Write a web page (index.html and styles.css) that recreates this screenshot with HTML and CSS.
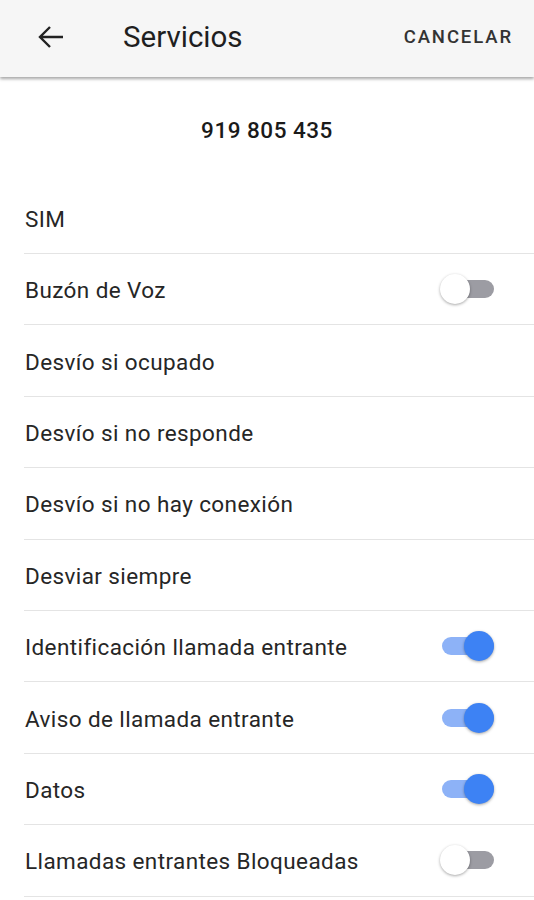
FILE: index.html
```html
<!DOCTYPE html>
<html lang="es">
<head>
    <meta charset="UTF-8" />
    <meta name="viewport" content="width=device-width, initial-scale=1.0" />
    <title>Servicios</title>
    <link rel="stylesheet" href="styles.css">
</head>
<body>

<header class="bar">
    <button class="back" aria-label="Volver">
        <svg width="26" height="24" viewBox="0 0 26 24">
            <path d="M25 12H3 M12 2L2 12L12 22" fill="none" stroke="#222" stroke-width="2.4" stroke-linejoin="miter"/>
        </svg>
    </button>
    <h1>Servicios</h1>
    <button class="cancel">CANCELAR</button>
</header>

<div class="number">919 805 435</div>

<ul class="list">
    <li><span>SIM</span></li>
    <li><span>Buzón de Voz</span><i class="toggle"></i></li>
    <li><span>Desvío si ocupado</span></li>
    <li><span>Desvío si no responde</span></li>
    <li><span>Desvío si no hay conexión</span></li>
    <li><span>Desviar siempre</span></li>
    <li><span>Identificación llamada entrante</span><i class="toggle on"></i></li>
    <li><span>Aviso de llamada entrante</span><i class="toggle on"></i></li>
    <li><span>Datos</span><i class="toggle on"></i></li>
    <li><span>Llamadas entrantes Bloqueadas</span><i class="toggle"></i></li>
</ul>

</body>
</html>
```

FILE: styles.css
```css
*{ box-sizing:border-box; font-family: Roboto, "Liberation Sans", sans-serif; }
body{ margin:0; background:#fff; color:#212121; }

.bar{ display:flex; align-items:center; height:77px; background:#f6f6f6; box-shadow:0 2px 3px rgba(0,0,0,0.35); padding:0 21px 4px 38px; }
.back{ border:0; background:none; padding:0; display:flex; margin-right:59px; }
.bar h1{ margin:0; flex:1; font-size:29.5px; font-weight:400; color:#1f1f1f; }
.cancel{ border:0; background:none; padding:0; font-size:18.5px; font-weight:500; letter-spacing:1.9px; color:#333; }

.number{ text-align:center; font-size:22.5px; font-weight:500; letter-spacing:0.5px; padding:40px 0 0; height:106px; color:#1a1a1a; }

.list{ list-style:none; margin:0; padding:0 0 0 24px; }
.list li{ display:flex; align-items:center; justify-content:space-between; height:71.4px; border-bottom:1px solid #e4e4e4; padding:2px 40px 0 1px; font-size:22.5px; letter-spacing:0.4px; color:#262626; }
.list li:first-child{ height:71px; }

.toggle{ position:relative; display:block; width:52px; height:18px; margin-top:-2px; border-radius:9px; background:#9c9ca3; }
.toggle::after{ content:""; position:absolute; left:-2px; top:-6px; width:30px; height:30px; border-radius:50%; background:#fff; box-shadow:0 1px 3px rgba(0,0,0,0.35); }
.toggle.on{ background:#8db2f7; }
.toggle.on::after{ left:auto; right:0; background:#3d82f4; }
```
